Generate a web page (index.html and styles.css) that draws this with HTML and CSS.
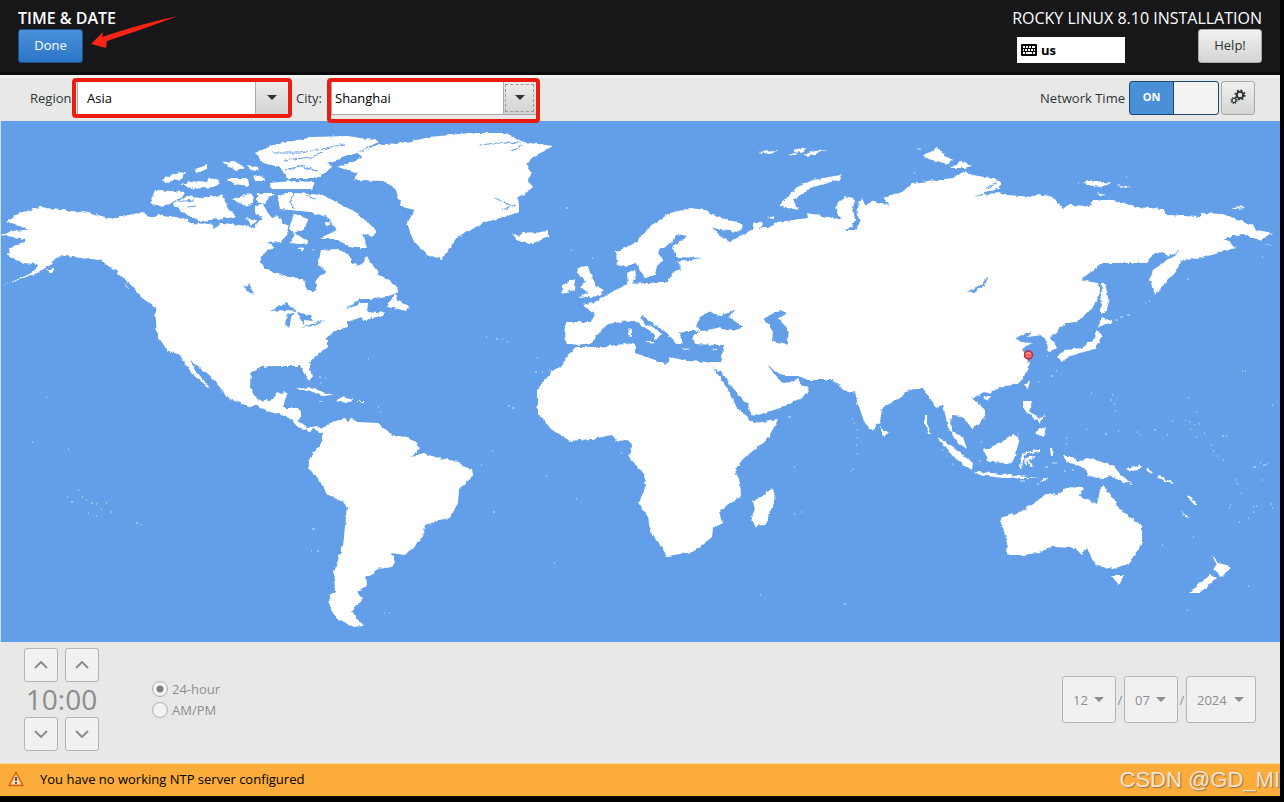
FILE: index.html
```html
<!DOCTYPE html>
<html lang="en">
<head>
<meta charset="utf-8">
<title>Time &amp; Date</title>
<link rel="stylesheet" href="styles.css">
</head>
<body>
<div class="window">
    <header class="header">
        <div class="header-left">
            <h1 class="title">TIME &amp; DATE</h1>
            <button class="btn btn-done" type="button">Done</button>
        </div>
        <div class="header-right">
            <p class="product">ROCKY LINUX 8.10 INSTALLATION</p>
            <div class="header-row">
                <div class="keyboard">
                    <svg width="16" height="12" viewBox="0 0 16 12"><rect width="16" height="12" rx="1"/><path d="M2 3h2m1 0h2m1 0h2m1 0h3M2 6h1m1 0h2m1 0h2m1 0h2m1 0h1M2 9h2m1 0h6m1 0h2" stroke="#fff" stroke-width="2"/></svg>
                    <span>us</span>
                </div>
                <button class="btn btn-help" type="button">Help!</button>
            </div>
        </div>
        <svg class="arrow" width="90" height="34" viewBox="0 0 90 34"><path d="M1 29L13 17L12 22Q50 9 88 1Q54 14 17 26L16 33Z" fill="#fb2414"/></svg>
    </header>

    <div class="toolbar">
        <label class="lbl" for="region">Region:</label>
        <div class="combo combo-region">
            <input id="region" type="text" value="Asia">
            <button class="drop" type="button" aria-label="Choose region"><i class="caret"></i></button>
        </div>
        <label class="lbl" for="city">City:</label>
        <div class="combo combo-city">
            <input id="city" type="text" value="Shanghai">
            <button class="drop focus" type="button" aria-label="Choose city"><i class="caret"></i></button>
        </div>
        <label class="lbl lbl-net" for="network">Network Time</label>
        <div class="switch">
            <input id="network" type="checkbox" checked>
            <span class="on">ON</span>
        </div>
        <button class="btn btn-gear" type="button" aria-label="Configure NTP">
            <svg width="16" height="16" viewBox="0 0 16 16" fill="none" stroke="#2e3436">
                <circle cx="10" cy="6" r="3.2" stroke-width="2"/>
                <circle cx="10" cy="6" r="4.8" stroke-width="1.6" stroke-dasharray="1.9 1.87"/>
                <circle cx="4" cy="11.500" r="2" stroke-width="1.200"/>
                <circle cx="4" cy="11.500" r="3" stroke-width="1.200" stroke-dasharray="1.200 1.156"/>
            </svg>
        </button>
    </div>

    <svg class="map" viewBox="0 121 1280 521">
        <defs>
            <filter id="coast" filterUnits="userSpaceOnUse" x="0" y="121" width="1280" height="521" color-interpolation-filters="sRGB">
                <feTurbulence type="fractalNoise" baseFrequency=".22" numOctaves="2" seed="4" result="n"/>
                <feDisplacementMap in="SourceGraphic" in2="n" scale="4" xChannelSelector="R" yChannelSelector="G"/>
            </filter>
        </defs>
        <rect x="0" y="121" width="1280" height="521" fill="#629fe8"/>
        <g filter="url(#coast)">
        <g fill="#fff">
            <!-- north and south america -->
            <path d="M6 221L20 213L40 207L53 209L90 213L113 219L143 212L147 215L153 217L158 214L187 219L190 223L210 224L215 228L223 223L240 225L255 228L257 223L263 219L255 213L255 207L263 204L268 213L272 218L278 216L283 223L288 227L287 235L280 242L267 243L275 247L267 250L262 257L260 263L267 270L290 277L304 279L306 288L313 293L317 290L315 280L325 273L322 267L318 263L321 250L337 249L345 253L352 258L352 263L358 266L363 263L367 257L380 275L397 285L398 292L387 297L373 299L360 299L345 310L360 303L368 303L367 312L377 313L384 311L382 315L363 321L362 317L347 322L347 327L333 332L327 338L327 347L310 362L310 368L313 377L310 381L303 372L300 366L275 366L260 367L251 373L250 388L255 397L260 401L273 399L277 393L288 392L285 400L283 408L298 408L301 412L299 422L307 428L317 426L322 429L330 423L345 418L348 421L352 418L357 422L378 423L382 427L395 436L408 437L415 442L419 448L412 457L423 453L438 458L458 461L465 467L472 469L473 475L459 490L458 503L450 518L438 520L425 526L423 537L405 555L391 553L395 562L392 567L376 569L375 575L366 576L367 585L357 592L363 598L355 607L352 612L363 626L353 627L337 618L330 607L329 595L335 592L334 573L337 563L343 545L347 507L343 502L328 495L317 477L308 468L310 457L322 443L322 433L313 429L309 432L298 427L287 416L270 412L258 406L248 406L227 398L222 390L214 380L200 368L190 361L196 371L207 384L210 389L202 382L191 373L187 367L180 355L167 350L157 335L155 307L142 298L133 287L117 272L100 260L72 257L60 255L50 265L37 273L2 286L23 277L35 271L38 264L22 263L8 255L10 247L25 243L25 239L1 235L13 231L27 230L20 226Z"/>
            <!-- greenland, iceland -->
            <path d="M338 167L363 157L357 153L377 145L407 142L430 137L470 133L507 133L523 142L553 146L533 157L526 164L532 173L528 180L533 187L518 198L520 212L483 223L457 237L442 259L427 255L413 240L407 223L415 210L402 207L395 188L383 181L353 180L358 174ZM512 233L519 236L524 232L535 233L547 231L549 237L530 244L516 240Z"/>
            <!-- arctic archipelago -->
            <path d="M255 153L273 145L313 137L347 136L380 141L357 153L327 163L332 167L318 178L287 178L280 167L263 163ZM270 183L290 181L315 182L312 189L272 189ZM278 197L285 193L297 193L323 195L357 213L376 230L373 237L362 233L367 248L353 248L333 238L320 238L337 230L327 217L310 212L280 209ZM173 203L187 196L200 198L223 195L228 208L237 217L200 221L182 212ZM150 203L155 190L185 192L180 198L163 207ZM180 184L197 181L207 182L209 177L221 182L215 187L193 189ZM161 180L175 173L186 172L182 179L166 182ZM232 199L252 193L253 203L245 206ZM257 193L275 193L263 204L257 201ZM290 243L295 233L310 243L300 244ZM294 214L308 219L305 228L294 233L289 229ZM195 169L207 165L207 169L196 173ZM222 162L235 161L245 168L235 170ZM247 165L258 167L259 171L250 170ZM227 178L248 178L249 186L234 184ZM253 175L264 177L265 181L255 181ZM325 223L329 221L331 225L326 226ZM298 248L304 247L303 251ZM311 250L315 249L315 252ZM245 218L258 220L252 225ZM113 219L138 213L122 220ZM47 269L57 269L50 274ZM140 296L155 300L162 309L156 306ZM124 282L130 291L126 287Z"/>
            <path d="M387 307L395 293L397 300L409 307L407 311L398 309ZM295 390L308 387L333 395L322 396L308 390ZM335 401L342 397L354 400L347 403ZM319 401H326V402H320ZM358 401H364V402H358Z"/>
            <!-- europe, africa, asia -->
            <path d="M566 322L592 322L594 313L582 305L592 303L602 298L612 292L628 284L627 273L635 269L636 276L632 284L647 283L667 283L673 272L682 269L677 262L702 258L677 257L672 248L687 236L677 234L672 243L660 248L658 253L663 260L657 265L655 275L645 278L635 262L627 267L617 265L616 252L635 243L652 225L670 213L690 208L705 210L717 217L738 222L743 227L738 232L720 230L712 227L722 237L730 242L742 235L753 229L753 222L762 223L760 228L768 228L778 222L808 218L807 213L828 217L842 220L835 208L840 201L845 197L855 200L853 208L855 220L851 228L843 230L855 230L861 221L858 217L857 207L862 198L865 205L874 201L889 205L883 197L902 192L913 183L953 178L963 172L973 175L1000 180L1000 188L973 197L1000 192L1007 195L1033 197L1038 194L1053 197L1063 209L1068 205L1090 206L1093 200L1113 200L1137 207L1163 209L1167 215L1200 217L1202 213L1223 214L1253 226L1257 230L1272 233L1260 240L1242 234L1225 238L1235 248L1202 258L1182 260L1175 273L1165 283L1155 295L1150 280L1153 270L1182 250L1167 257L1165 252L1155 253L1145 263L1103 263L1080 280L1098 283L1100 293L1093 307L1077 322L1065 323L1057 332L1051 337L1057 348L1048 352L1047 342L1042 335L1028 337L1031 331L1015 338L1022 342L1032 343L1022 349L1030 363L1028 370L1020 382L1000 388L988 393L984 392L973 398L985 410L985 417L972 429L968 423L962 417L953 416L950 422L953 432L963 437L967 449L957 442L948 428L946 418L943 405L935 407L930 398L922 387L907 391L902 397L882 408L880 422L872 431L865 423L857 402L855 391L848 393L833 380L807 380L798 376L783 376L768 366L778 378L782 383L793 382L797 378L802 385L809 389L802 398L780 408L752 417L748 405L733 388L720 370L718 372L712 366L727 388L737 408L750 420L753 423L778 420L768 438L742 460L735 470L740 483L741 496L720 511L723 523L713 528L712 537L693 552L667 556L662 548L650 530L648 517L639 503L646 485L643 473L629 457L632 445L628 440L617 441L612 435L592 439L570 441L552 430L537 412L537 390L550 373L563 365L565 357L577 347L598 347L635 343L635 353L667 364L670 357L687 361L710 362L720 362L724 345L713 345L695 344L692 335L700 331L687 331L679 333L683 343L677 344L667 333L643 316L640 318L645 324L662 333L655 341L655 334L633 320L608 324L595 337L592 343L577 345L565 343Z"/>
            <!-- islands of europe and asia -->
            <path d="M578 267L588 266L590 273L597 287L604 290L600 296L578 298L588 292L580 288L586 281L577 273ZM562 285L575 279L574 290L562 293ZM780 205L797 187L813 180L840 175L841 179L810 188L793 200L799 210L788 208ZM751 517L755 510L753 501L763 496L772 488L776 497L765 525L755 526ZM922 156L937 148L944 154L952 160L948 164L932 160ZM951 168L960 161L972 166L963 168ZM1083 184L1087 180L1112 183L1100 187ZM1116 185L1132 187L1125 188ZM1097 193L1106 195L1100 196ZM1232 208L1244 206L1245 208L1235 209ZM1265 244L1275 246L1268 245ZM767 218L775 216L774 219ZM757 152L780 151L770 154ZM788 155L798 152L796 155ZM792 150L807 147L802 153ZM802 155L815 151L827 150L810 156ZM1097 330L1102 335L1095 349L1080 353L1067 357L1062 362L1058 357L1065 350L1082 348L1095 338ZM1102 317L1113 322L1098 327ZM1102 283L1105 283L1109 302L1105 313L1101 313ZM1024 385L1030 381L1027 390ZM983 397L991 396L987 401ZM880 426L888 433L883 437ZM682 348L690 349L684 350ZM712 350L718 348L716 351ZM645 341L654 341L652 344ZM629 329L632 328L632 337L628 336Z"/>
            <path d="M936 437L943 440L960 453L973 463L972 470L957 460ZM973 471L1000 474L1027 477L1040 478L1003 478L980 475ZM984 450L1002 442L1012 434L1020 438L1013 462L1007 464L988 461ZM1063 456L1073 456L1077 462L1087 458L1113 465L1120 474L1133 484L1120 481L1110 476L1103 479L1088 476L1086 469L1077 465L1067 462ZM1024 401L1032 401L1029 411L1036 416L1028 414L1024 409ZM1036 430L1046 427L1044 437L1037 434ZM1125 470L1137 466L1138 463L1142 467L1134 471ZM1036 484L1048 477L1043 482ZM1180 511L1190 518L1186 517Z"/>
            <!-- australia, new zealand -->
            <path d="M1000 518L1020 512L1032 505L1047 493L1057 495L1067 487L1083 488L1080 496L1097 504L1100 490L1103 484L1108 493L1115 500L1117 507L1125 513L1142 527L1142 543L1130 563L1113 569L1097 566L1092 559L1087 548L1082 555L1075 548L1053 547L1037 553L1017 556L1006 554L1007 543ZM1111 576L1124 576L1118 585ZM1212 555L1218 563L1231 566L1222 577L1214 569L1217 565ZM1210 575L1216 578L1200 593L1189 593Z"/>
        </g>
        <g fill="none" stroke="#fff" stroke-width="2">
            <path d="M1021 468L1023 454L1040 450M1024 460L1034 457M1027 459L1033 467M1025 459L1026 465M926 416V424L930 433M1033 414L1040 423M1045 415L1038 421M1051 447L1052 456M1146 469L1152 473M1157 476L1173 484M1188 496L1196 505"/>
        </g>
        <!-- lakes and inland seas -->
        <g fill="#629fe8">
            <path d="M696 327L700 317L710 311L718 317L735 310L728 317L744 327L733 331L717 328L702 331ZM764 318L780 310L787 313L778 318L787 328L788 344L772 341L773 332ZM966 293L976 288L982 284L987 277L985 286L974 292ZM270 311L286 303L297 311L285 310ZM285 324L287 315L295 312L291 319L289 328ZM297 312L310 315L313 321L304 320L304 326ZM300 328L315 323L326 320L313 326ZM244 287L249 283L254 295L251 294Z"/>
        </g>
        <g fill="none" stroke="#629fe8" stroke-width="1">
            <path d="M273 153H300L318 150L345 144M285 160L312 157L331 147M285 170L300 166L318 171M480 145L505 142L520 143M512 151L522 145M495 198L512 206M502 210L516 205M294 194L290 202L294 209M306 195L316 200M177 202L193 200M187 207L197 206M1000 180L985 189"/>
        </g>
        </g>
        <!-- small island groups -->
        <path class="islets" d="M67 497h1M71 502h2M82 497h1M86 500h1M91 503h2M96 504h1M101 509h1M106 503h1M111 512h1M88 513h1M96 516h1M78 490h1M136 523h2M140 525h1M32 442h1M46 397h1M68 449h1M312 529h3M311 551h1M317 551h2M384 613h1M389 613h1M368 359h1M486 337h1M496 339h2M502 339h1M507 342h1M508 406h2M512 408h3M537 358h1M535 372h2M542 372h1M549 370h1M492 451h1M481 465h1M493 512h2M378 407h1M380 412h1M319 377h2M320 383h1M325 378h1M566 208h2M571 250h1M592 258h1M546 476h1M576 499h1M554 563h1M621 453h1M788 417h3M794 467h1M794 514h1M801 512h1M844 604h2M760 595h1M852 419h1M854 423h1M857 430h1M857 438h1M856 445h1M857 454h1M853 469h1M851 471h1M1112 395h1M1111 400h1M1114 404h1M1115 411h1M1091 393h1M1188 398h1M1196 412h1M1172 421h1M1185 420h1M1189 422h1M1194 425h1M1199 424h1M1190 429h1M1196 437h1M1204 433h1M1137 432h1M1140 435h1M1154 430h2M1167 435h1M1105 434h2M1118 431h1M1086 429h1M1066 438h1M1066 444h1M1222 436h2M1226 436h1M1211 445h1M1213 451h1M1217 456h1M1223 460h1M1253 467h3M1263 465h3M1260 463h1M1267 464h1M1235 480h1M1237 484h1M1262 480h1M1241 493h1M1230 505h1M1253 507h1M1256 506h1M1253 512h1M1271 504h1M1229 508h1M1272 508h1M1239 522h1M1248 518h1M1162 545h1M1193 537h1M1248 586h1M1187 610h1M1242 371h1M1245 371h1M1272 405h1M1262 257h1M1187 279h2M1149 301h1M1145 303h1M1115 320h3M1120 317h3M1127 315h3M1056 371h1M1051 376h2M1047 356h1M1038 382h1M1045 467h3M1052 463h5M1018 434h1M952 464h1M946 456h1M942 450h1M979 461h2M981 442h1M1010 477h5M1020 481h5M1064 471h2M1072 470h2M914 173h1M917 149h4M1126 177h1M1078 183h1"/>
        <!-- city marker -->
        <path d="M1028 359V363" stroke="#a88080"/>
        <circle cx="1028.500" cy="355" r="4" fill="#f06a6c" stroke="#b92a37" stroke-width="1.500"/>
        <path d="M1026 354Q1028 351 1031 354" fill="none" stroke="#ffb0ae"/>
        <rect x="0" y="121" width="1" height="521" fill="#c9dcf0"/>
    </svg>

    <div class="controls">
        <div class="clock">
            <button class="step" type="button" disabled aria-label="Hour up"><svg width="14" height="8" viewBox="0 0 14 8"><path d="M1 7L7 1L13 7"/></svg></button>
            <button class="step" type="button" disabled aria-label="Minute up"><svg width="14" height="8" viewBox="0 0 14 8"><path d="M1 7L7 1L13 7"/></svg></button>
            <div class="time">10:00</div>
            <button class="step" type="button" disabled aria-label="Hour down"><svg width="14" height="8" viewBox="0 0 14 8"><path d="M1 1L7 7L13 1"/></svg></button>
            <button class="step" type="button" disabled aria-label="Minute down"><svg width="14" height="8" viewBox="0 0 14 8"><path d="M1 1L7 7L13 1"/></svg></button>
        </div>
        <div class="format">
            <label><input type="radio" name="format" checked disabled>24-hour</label>
            <label><input type="radio" name="format" disabled>AM/PM</label>
        </div>
        <div class="date">
            <div class="pick"><select disabled aria-label="Month"><option>12</option></select></div>
            <span class="slash">/</span>
            <div class="pick"><select disabled aria-label="Day"><option>07</option></select></div>
            <span class="slash">/</span>
            <div class="pick pick-year"><select disabled aria-label="Year"><option>2024</option></select></div>
        </div>
    </div>

    <footer class="warning">
        <svg width="16" height="16" viewBox="0 0 16 16"><path d="M8 1.500L15 14.500H1Z" fill="#f3a55c" stroke="#d9600f" stroke-width="1.500" stroke-linejoin="round"/><path d="M8 3.500L13 13.300H3Z" fill="#fbdcae"/><path d="M8 6V10M8 11V13" stroke="#333" stroke-width="1.600"/></svg>
        <span>You have no working NTP server configured</span>
        <span class="mark">CSDN @GD_MI</span>
    </footer>
</div>
</body>
</html>
```
FILE: styles.css
```css
*{
    box-sizing: border-box;
}
body{
    margin: 0;
    padding-right: 4px;
    background: #000;
    color: #2e3436;
    font-family: "Open Sans", "Noto Sans", sans-serif;
    font-size: 13px;
    line-height: 18px;
}
input, button, select{
    margin: 0;
    font: inherit;
    color: inherit;
}
.window{
    background: #e8e8e7;
}

/* header */
.header{
    position: relative;
    display: flex;
    justify-content: space-between;
    padding: 8px 18px 9px;
    background: #17171a;
    border-bottom: 3px solid #0c0c0e;
    color: #fff;
}
.title, .product{
    margin: 0 0 1px;
    font-size: 16px;
    line-height: 20px;
    font-weight: 400;
}
.title{
    font-weight: 600;
}
.header-row{
    display: flex;
    justify-content: space-between;
    align-items: flex-end;
    width: 245px;
    margin-left: auto;
}
.btn{
    height: 34px;
    padding: 0 0 2px;
    border: 1px solid #a9a9a7;
    border-radius: 3px;
    background: linear-gradient(#f1f1f0, #d4d4d2);
    color: #2e3436;
}
.btn-done{
    width: 65px;
    border-color: #1c5187;
    background: linear-gradient(#4a90d9, #2a76c6);
    color: #fff;
}
.btn-help{
    width: 64px;
}
.btn-gear{
    display: flex;
    align-items: center;
    justify-content: center;
    width: 34px;
    margin-left: 2px;
}
.keyboard{
    display: flex;
    align-items: center;
    gap: 4px;
    width: 108px;
    height: 26px;
    padding-left: 4px;
    background: #fff;
    color: #000;
    font-weight: 700;
}
.arrow{
    position: absolute;
    left: 90px;
    top: 15px;
}

/* location bar */
.toolbar{
    display: flex;
    align-items: center;
    height: 46px;
    padding: 0 25px 4px 30px;
    border-top: 3px solid #f1f1f0;
}
.lbl{
    width: 47px;
    flex: none;
}
.combo + .lbl{
    width: 35px;
    margin-left: 7px;
}
.combo + .lbl-net{
    width: auto;
    margin: 0 4px 0 auto;
}
.combo{
    position: relative;
    display: flex;
    height: 34px;
    border: 1px solid #aaa;
}
.combo-region{
    width: 212px;
}
.combo-city{
    width: 206px;
}
.combo input{
    flex: 1;
    min-width: 0;
    padding: 0 9px;
    border: 0;
    background: #fff;
    color: #000;
    outline: none;
}
.combo-city input{
    padding: 0 3px;
}
.drop{
    display: flex;
    align-items: center;
    justify-content: center;
    width: 33px;
    padding: 0;
    border: 0;
    border-left: 1px solid #aaa;
    background: linear-gradient(#ededec, #d3d3d1);
}
.focus{
    outline: 1px dashed #999;
    outline-offset: -3px;
}
.caret{
    border: 5px solid transparent;
    border-top-color: #2e3436;
    border-bottom: 0;
}
/* red highlight frames */
.combo::after{
    content: "";
    position: absolute;
    inset: -4px -4px -4px -6px;
    border: 4px solid #ec1c10;
    border-radius: 4px;
    pointer-events: none;
}
.combo-city::after{
    inset: -4px -4px -9px -5px;
}
.switch{
    position: relative;
    width: 90px;
    height: 34px;
}
.switch input{
    appearance: none;
    display: block;
    width: 90px;
    height: 34px;
    border: 1px solid #1c4672;
    border-radius: 3px;
    background: linear-gradient(90deg, #4a90d9 43px, #1c4672 43px, #1c4672 44px, #f3f3f2 44px);
}
.on{
    position: absolute;
    left: 1px;
    top: 7px;
    width: 43px;
    color: #fff;
    font-size: 11px;
    font-weight: 700;
    text-align: center;
    pointer-events: none;
}

.map{
    display: block;
    width: 100%;
    height: auto;
}
.islets{
    fill: none;
    stroke: #d6e6fa;
    stroke-width: 1;
}

/* manual time and date */
.controls{
    display: flex;
    align-items: center;
    height: 121px;
    padding: 0 24px 6px;
    color: #8b8e8f;
}
.clock{
    display: grid;
    grid-template-columns: 34px 34px;
    column-gap: 7px;
}
.step{
    display: flex;
    align-items: center;
    justify-content: center;
    height: 34px;
    padding: 0;
    border: 1px solid #b4b4b2;
    border-radius: 3px;
    background: #f1f1f1;
}
.step svg{
    fill: none;
    stroke: #8b8e8f;
    stroke-width: 2;
}
.time{
    grid-column: 1 / 3;
    height: 35px;
    font-size: 28px;
    line-height: 34px;
    text-align: center;
}
.format{
    margin-left: 53px;
}
.format label{
    display: flex;
    align-items: center;
    height: 21px;
}
.format input{
    appearance: none;
    width: 16px;
    height: 16px;
    margin-right: 4px;
    border: 1px solid #b0b0ae;
    border-radius: 50%;
    background: #f3f3f3;
}
.format input:checked{
    background: radial-gradient(circle, #7d8081 3px, #f3f3f3 4px);
}
.date{
    display: flex;
    align-items: center;
    margin-left: auto;
}
.pick{
    position: relative;
    width: 54px;
}
.pick-year{
    width: 70px;
}
.pick select{
    appearance: none;
    display: block;
    width: 100%;
    height: 47px;
    padding: 0 10px;
    border: 1px solid #b4b4b2;
    border-radius: 3px;
    background: #f1f1f1;
    opacity: 1;
}
.pick::after{
    content: "";
    position: absolute;
    right: 12px;
    top: 21px;
    border: 5px solid transparent;
    border-top-color: #8b8e8f;
    border-bottom: 0;
}
.slash{
    width: 8px;
    text-align: center;
}

.warning{
    position: relative;
    display: flex;
    align-items: center;
    gap: 16px;
    height: 33px;
    padding: 0 0 2px 8px;
    border-top: 1px solid #f3d9a4;
    background: #fbac3b;
    color: #000;
}
.mark{
    position: absolute;
    right: 0;
    top: 4px;
    color: #f3e3cc;
    font-family: "Liberation Sans", sans-serif;
    font-size: 22px;
    line-height: 24px;
    text-shadow: 1px 1px 1px #8d7350;
}
```
